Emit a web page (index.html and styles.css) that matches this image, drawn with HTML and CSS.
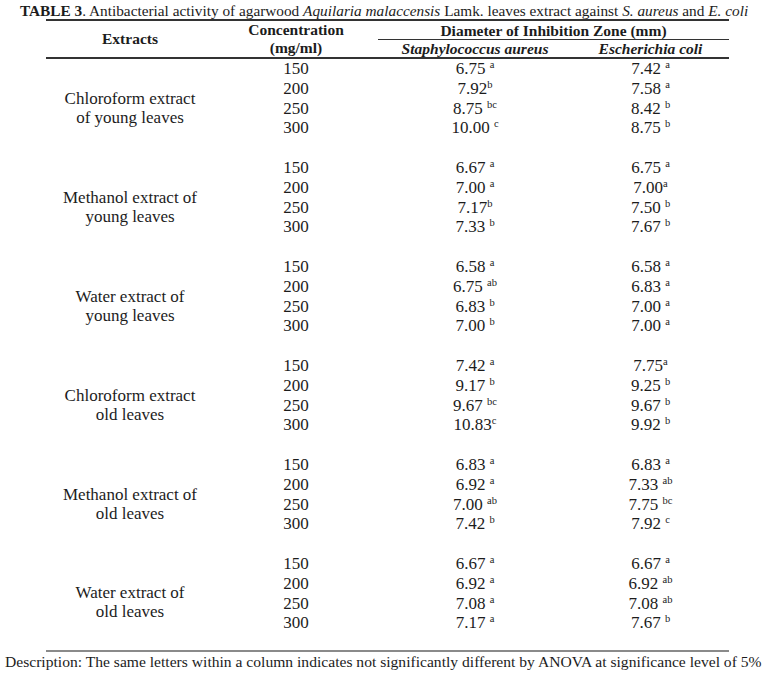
FILE: index.html
```html
<!DOCTYPE html>
<html lang="en">
<head>
<meta charset="utf-8">
<title>Table 3</title>
<link rel="stylesheet" href="styles.css">
</head>
<body>
<p class="caption"><b>TABLE 3</b>. Antibacterial activity of agarwood <i>Aquilaria malaccensis</i> Lamk. leaves extract against <i>S. aureus</i> and <i>E. coli</i></p>
<table class="data">
  <colgroup>
    <col class="c-ext"><col class="c-conc"><col class="c-sa"><col class="c-ec">
  </colgroup>
  <thead>
    <tr>
      <th rowspan="2" class="h-ext">Extracts</th>
      <th rowspan="2" class="h-conc">Concentration<br>(mg/ml)</th>
      <th colspan="2" class="h-dia">Diameter of Inhibition Zone (mm)</th>
    </tr>
    <tr>
      <th class="h-sp"><i>Staphylococcus aureus</i></th>
      <th class="h-sp"><i>Escherichia coli</i></th>
    </tr>
  </thead>
  <tbody>
    <tr><td rowspan="5" class="lbl">Chloroform extract<br>of young leaves</td><td>150</td><td>6.75 <sup>a</sup></td><td>7.42 <sup>a</sup></td></tr>
    <tr><td>200</td><td>7.92<sup>b</sup></td><td>7.58 <sup>a</sup></td></tr>
    <tr><td>250</td><td>8.75 <sup>bc</sup></td><td>8.42 <sup>b</sup></td></tr>
    <tr><td>300</td><td>10.00 <sup>c</sup></td><td>8.75 <sup>b</sup></td></tr>
    <tr class="gap"><td></td><td></td><td></td></tr>

    <tr><td rowspan="5" class="lbl">Methanol extract of<br>young leaves</td><td>150</td><td>6.67 <sup>a</sup></td><td>6.75 <sup>a</sup></td></tr>
    <tr><td>200</td><td>7.00 <sup>a</sup></td><td>7.00<sup>a</sup></td></tr>
    <tr><td>250</td><td>7.17<sup>b</sup></td><td>7.50 <sup>b</sup></td></tr>
    <tr><td>300</td><td>7.33 <sup>b</sup></td><td>7.67 <sup>b</sup></td></tr>
    <tr class="gap"><td></td><td></td><td></td></tr>

    <tr><td rowspan="5" class="lbl">Water extract of<br>young leaves</td><td>150</td><td>6.58 <sup>a</sup></td><td>6.58 <sup>a</sup></td></tr>
    <tr><td>200</td><td>6.75 <sup>ab</sup></td><td>6.83 <sup>a</sup></td></tr>
    <tr><td>250</td><td>6.83 <sup>b</sup></td><td>7.00 <sup>a</sup></td></tr>
    <tr><td>300</td><td>7.00 <sup>b</sup></td><td>7.00 <sup>a</sup></td></tr>
    <tr class="gap"><td></td><td></td><td></td></tr>

    <tr><td rowspan="5" class="lbl">Chloroform extract<br>old leaves</td><td>150</td><td>7.42 <sup>a</sup></td><td>7.75<sup>a</sup></td></tr>
    <tr><td>200</td><td>9.17 <sup>b</sup></td><td>9.25 <sup>b</sup></td></tr>
    <tr><td>250</td><td>9.67 <sup>bc</sup></td><td>9.67 <sup>b</sup></td></tr>
    <tr><td>300</td><td>10.83<sup>c</sup></td><td>9.92 <sup>b</sup></td></tr>
    <tr class="gap"><td></td><td></td><td></td></tr>

    <tr><td rowspan="5" class="lbl">Methanol extract of<br>old leaves</td><td>150</td><td>6.83 <sup>a</sup></td><td>6.83 <sup>a</sup></td></tr>
    <tr><td>200</td><td>6.92 <sup>a</sup></td><td>7.33 <sup>ab</sup></td></tr>
    <tr><td>250</td><td>7.00 <sup>ab</sup></td><td>7.75 <sup>bc</sup></td></tr>
    <tr><td>300</td><td>7.42 <sup>b</sup></td><td>7.92 <sup>c</sup></td></tr>
    <tr class="gap"><td></td><td></td><td></td></tr>

    <tr><td rowspan="5" class="lbl">Water extract of<br>old leaves</td><td>150</td><td>6.67 <sup>a</sup></td><td>6.67 <sup>a</sup></td></tr>
    <tr><td>200</td><td>6.92 <sup>a</sup></td><td>6.92 <sup>ab</sup></td></tr>
    <tr><td>250</td><td>7.08 <sup>a</sup></td><td>7.08 <sup>ab</sup></td></tr>
    <tr><td>300</td><td>7.17 <sup>a</sup></td><td>7.67 <sup>b</sup></td></tr>
    <tr class="gap last"><td></td><td></td><td></td></tr>
  </tbody>
</table>
<p class="note">Description: The same letters within a column indicates not significantly different by ANOVA at significance level of 5%</p>
</body>
</html>
```

FILE: styles.css
```css
html, body {
  margin: 0;
  padding: 0;
  background: #ffffff;
}
body {
  font-family: "Liberation Serif", "Times New Roman", serif;
  color: #1c1c1c;
  width: 768px;
  height: 674px;
  overflow: hidden;
}
.caption {
  margin: 0;
  padding: 2px 0 0 20px;
  height: 17px;
  font-size: 15.3px;
  line-height: 17px;
  white-space: nowrap;
}
.data {
  margin-left: 46px;
  width: 683px;
  table-layout: fixed;
  border-collapse: separate;
  border-spacing: 0;
  border-top: 2px solid #333;
  border-bottom: 2px solid #8a8a8a;
  font-family: "Liberation Serif", "Times New Roman", serif;
}
.c-ext { width: 168px; }
.c-conc { width: 164px; }
.c-sa { width: 194px; }
.c-ec { width: 157px; }

.data th {
  font-family: "Liberation Serif", "Times New Roman", serif;
  font-weight: bold;
  font-size: 15.5px;
  padding: 0;
  line-height: 18px;
  text-align: center;
  vertical-align: middle;
  border-bottom: 2px solid #333;
}
.data th.h-dia {
  line-height: 17px;
  padding-top: 1px;
  border-bottom: 1.5px solid #333;
}
.data th.h-sp {
  line-height: 14.5px;
  padding-top: 2px;
}
.data td {
  font-family: "Liberation Serif", "Times New Roman", serif;
  font-size: 17px;
  padding: 0;
  height: 19.8px;
  line-height: 19.8px;
  text-align: center;
  vertical-align: middle;
}
.data td.lbl {
  line-height: 19.5px;
}
.data tr.last td {
  height: 17px;
  line-height: 17px;
}
.data sup {
  font-size: 10.5px;
  line-height: 0;
  vertical-align: 6px;
}
.note {
  margin: 0;
  padding: 0 0 0 5px;
  font-size: 15.6px;
  line-height: 20px;
  white-space: nowrap;
}
```
